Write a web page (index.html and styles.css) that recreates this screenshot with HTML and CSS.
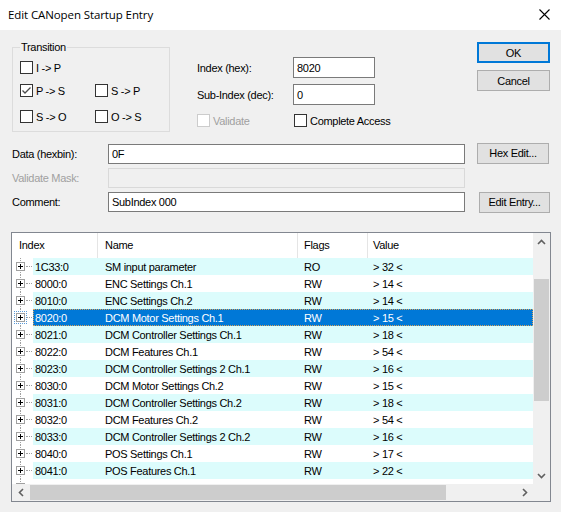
FILE: index.html
```html
<!DOCTYPE html>
<html>
<head>
<meta charset="utf-8">
<link rel="stylesheet" href="styles.css">
</head>
<body>
<div class="dialog">
  <div class="titlebar">
    <span class="title">Edit CANopen Startup Entry</span>
    <svg class="close" width="11" height="11" viewBox="0 0 11 11"><path d="M0.5 0.5 L10.5 10.5 M10.5 0.5 L0.5 10.5" stroke="#000" stroke-width="1.1" fill="none"/></svg>
  </div>
  <div class="content">
    <div class="top">
      <div class="group">
        <span class="legend">Transition</span>
        <div class="grow r1">
          <label class="chk"><span class="cb"></span><span>I -&gt; P</span></label>
        </div>
        <div class="grow r2">
          <label class="chk"><span class="cb"><svg width="11" height="11" viewBox="0 0 11 11"><path d="M1.5 5.5 L4 8 L9.5 2.5" stroke="#4a4a4a" stroke-width="1.3" fill="none"/></svg></span><span>P -&gt; S</span></label>
          <label class="chk"><span class="cb"></span><span>S -&gt; P</span></label>
        </div>
        <div class="grow r3">
          <label class="chk"><span class="cb"></span><span>S -&gt; O</span></label>
          <label class="chk"><span class="cb"></span><span>O -&gt; S</span></label>
        </div>
      </div>
      <div class="mid">
        <div class="frow"><span class="flabel">Index (hex):</span><span class="input small">8020</span></div>
        <div class="frow f2"><span class="flabel">Sub-Index (dec):</span><span class="input small">0</span></div>
        <div class="vrow">
          <label class="chk disabled w97"><span class="cb"></span><span>Validate</span></label>
          <label class="chk"><span class="cb"></span><span>Complete Access</span></label>
        </div>
      </div>
      <div class="btns">
        <div class="btn default">OK</div>
        <div class="btn b2">Cancel</div>
      </div>
    </div>
    <div class="data">
      <span class="dlabel">Data (hexbin):</span><span class="input">0F</span><div class="btn hex">Hex Edit...</div>
      <span class="dlabel disabledtext">Validate Mask:</span><span class="input dis"></span><span></span>
      <span class="dlabel">Comment:</span><span class="input">SubIndex 000</span><div class="btn edit">Edit Entry...</div>
    </div>
    <div class="list">
      <div class="view">
        <div class="hdr">
          <div class="hc c1">Index</div>
          <div class="hc c2">Name</div>
          <div class="hc c3">Flags</div>
          <div class="hc c4">Value</div>
        </div>
        <div class="row alt"><div class="tw"><span class="box"></span></div><div class="rc"><span class="d1">1C33:0</span><span class="d2">SM input parameter</span><span class="d3">RO</span><span class="d4">&gt; 32 &lt;</span></div></div>
        <div class="row"><div class="tw"><span class="box"></span></div><div class="rc"><span class="d1">8000:0</span><span class="d2">ENC Settings Ch.1</span><span class="d3">RW</span><span class="d4">&gt; 14 &lt;</span></div></div>
        <div class="row alt"><div class="tw"><span class="box"></span></div><div class="rc"><span class="d1">8010:0</span><span class="d2">ENC Settings Ch.2</span><span class="d3">RW</span><span class="d4">&gt; 14 &lt;</span></div></div>
        <div class="row sel"><div class="tw"><span class="box"></span></div><div class="rc"><span class="d1">8020:0</span><span class="d2">DCM Motor Settings Ch.1</span><span class="d3">RW</span><span class="d4">&gt; 15 &lt;</span></div></div>
        <div class="row alt"><div class="tw"><span class="box"></span></div><div class="rc"><span class="d1">8021:0</span><span class="d2">DCM Controller Settings Ch.1</span><span class="d3">RW</span><span class="d4">&gt; 18 &lt;</span></div></div>
        <div class="row"><div class="tw"><span class="box"></span></div><div class="rc"><span class="d1">8022:0</span><span class="d2">DCM Features Ch.1</span><span class="d3">RW</span><span class="d4">&gt; 54 &lt;</span></div></div>
        <div class="row alt"><div class="tw"><span class="box"></span></div><div class="rc"><span class="d1">8023:0</span><span class="d2">DCM Controller Settings 2 Ch.1</span><span class="d3">RW</span><span class="d4">&gt; 16 &lt;</span></div></div>
        <div class="row"><div class="tw"><span class="box"></span></div><div class="rc"><span class="d1">8030:0</span><span class="d2">DCM Motor Settings Ch.2</span><span class="d3">RW</span><span class="d4">&gt; 15 &lt;</span></div></div>
        <div class="row alt"><div class="tw"><span class="box"></span></div><div class="rc"><span class="d1">8031:0</span><span class="d2">DCM Controller Settings Ch.2</span><span class="d3">RW</span><span class="d4">&gt; 18 &lt;</span></div></div>
        <div class="row"><div class="tw"><span class="box"></span></div><div class="rc"><span class="d1">8032:0</span><span class="d2">DCM Features Ch.2</span><span class="d3">RW</span><span class="d4">&gt; 54 &lt;</span></div></div>
        <div class="row alt"><div class="tw"><span class="box"></span></div><div class="rc"><span class="d1">8033:0</span><span class="d2">DCM Controller Settings 2 Ch.2</span><span class="d3">RW</span><span class="d4">&gt; 16 &lt;</span></div></div>
        <div class="row"><div class="tw"><span class="box"></span></div><div class="rc"><span class="d1">8040:0</span><span class="d2">POS Settings Ch.1</span><span class="d3">RW</span><span class="d4">&gt; 17 &lt;</span></div></div>
        <div class="row alt"><div class="tw"><span class="box"></span></div><div class="rc"><span class="d1">8041:0</span><span class="d2">POS Features Ch.1</span><span class="d3">RW</span><span class="d4">&gt; 22 &lt;</span></div></div>
        <div class="row"><div class="tw"><span class="box"></span></div><div class="rc"><span class="d1">8050:0</span><span class="d2">POS Settings Ch.2</span><span class="d3">RW</span><span class="d4">&gt; 17 &lt;</span></div></div>
      </div>
      <div class="vscroll">
        <div class="arrow"><svg width="9" height="6" viewBox="0 0 9 6"><path d="M1 5 L4.5 1.5 L8 5" stroke="#606060" stroke-width="1.6" fill="none"/></svg></div>
        <div class="vtrack"><div class="vthumb"></div></div>
        <div class="arrow"><svg width="9" height="6" viewBox="0 0 9 6"><path d="M1 1 L4.5 4.5 L8 1" stroke="#606060" stroke-width="1.6" fill="none"/></svg></div>
      </div>
      <div class="hscroll">
        <div class="harrow"><svg width="6" height="9" viewBox="0 0 6 9"><path d="M5 1 L1.5 4.5 L5 8" stroke="#606060" stroke-width="1.6" fill="none"/></svg></div>
        <div class="htrack"><div class="hthumb"></div></div>
        <div class="harrow"><svg width="6" height="9" viewBox="0 0 6 9"><path d="M1 1 L4.5 4.5 L1 8" stroke="#606060" stroke-width="1.6" fill="none"/></svg></div>
      </div>
      <div class="corner"></div>
    </div>
  </div>
</div>
</body>
</html>
```
FILE: styles.css
```css
* { box-sizing: border-box; }
html, body { margin: 0; padding: 0; }
body {
  width: 561px;
  height: 512px;
  overflow: hidden;
  background: #f0f0f0;
  font-family: "Liberation Sans", Arial, sans-serif;
  font-size: 11px;
  letter-spacing: -0.3px;
  color: #000;
}
.dialog { width: 561px; height: 512px; }
.titlebar {
  height: 30px;
  background: #fff;
  display: flex;
  align-items: center;
  padding-left: 8px;
}
.title {
  font-family: "Open Sans", "Noto Sans", sans-serif;
  font-size: 11.5px;
  letter-spacing: -0.1px;
  margin-top: -1px;
}
.close { margin-left: auto; margin-right: 11px; margin-top: -2px; }
.content { padding: 0 11px 0 12px; }

.top { display: flex; height: 105px; }
.group {
  position: relative;
  margin-top: 17px;
  width: 158px;
  height: 85px;
  border: 1px solid #dcdcdc;
  padding: 13px 0 0 7px;
}
.legend {
  position: absolute;
  top: -8px;
  left: 7px;
  padding: 0 1px;
  background: #f0f0f0;
  line-height: 14px;
}
.grow { display: flex; height: 13px; }
.grow .chk:first-child { width: 75px; }
.r2 { margin-top: 10px; }
.r3 { margin-top: 13px; }
.chk { display: flex; align-items: center; height: 13px; white-space: nowrap; }
.cb {
  width: 13px; height: 13px;
  border: 1px solid #333;
  background: #fff;
  margin-right: 3px;
  flex: none;
  display: flex;
}
.disabled { color: #a0a0a0; }
.disabled .cb { border-color: #cccccc; background: #fff; }

.mid { margin-left: 27px; padding-top: 27px; }
.frow { display: flex; align-items: center; height: 21px; }
.f2 { margin-top: 6px; }
.flabel { width: 96px; }
.input {
  display: flex;
  align-items: center;
  height: 20px;
  border: 1px solid #7a7a7a;
  background: #fff;
  padding-left: 3px;
}
.input.small { width: 82px; height: 21px; }
.input.dis { border-color: #d9d9d9; background: #f0f0f0; }
.vrow { display: flex; margin-top: 9px; }
.w97 { width: 97px; }

.btns { margin-left: auto; padding-top: 12px; }
.btn {
  display: flex;
  align-items: center;
  justify-content: center;
  width: 73px;
  height: 21px;
  background: #e1e1e1;
  border: 1px solid #adadad;
}
.btn.default { border: 2px solid #0078d7; }
.btn.b2 { margin-top: 7px; }

.data {
  display: grid;
  grid-template-columns: 96px 357px 85px;
  grid-auto-rows: 20px;
  row-gap: 4px;
  margin-top: 9px;
  align-items: center;
}
.disabledtext { color: #a0a0a0; }
.btn.hex { width: 72px; margin-left: 12px; margin-top: -2px; }
.btn.edit { width: 71px; margin-left: 14px; }

.list {
  margin-top: 20px;
  margin-left: -1px;
  width: 540px;
  height: 270px;
  border: 1px solid #828790;
  background: #fff;
  display: grid;
  grid-template-columns: 521px 17px;
  grid-template-rows: 251px 17px;
}
.view { overflow: hidden; background: #fff; }
.hdr { display: flex; height: 25px; }
.hc {
  height: 25px;
  display: flex;
  align-items: center;
  border-right: 1px solid #e5e5e5;
  padding-bottom: 1px;
}
.hc.c1 { width: 86px; padding-left: 7px; }
.hc.c2 { width: 200px; padding-left: 7px; }
.hc.c3 { width: 70px; padding-left: 6px; }
.hc.c4 { flex: 1; padding-left: 5px; border-right: none; }

.row { display: flex; height: 17px; }
.tw {
  position: relative;
  width: 21px;
  flex: none;
  display: flex;
  align-items: center;
}
.tw::before {
  content: "";
  position: absolute;
  left: 8px;
  top: 0;
  bottom: 0;
  border-left: 1px dotted #a0a0a0;
}
.tw::after {
  content: "";
  width: 6px;
  margin-left: 1px;
  border-top: 1px dotted #a0a0a0;
}
.box {
  position: relative;
  width: 9px;
  height: 9px;
  margin-left: 4px;
  border: 1px solid #a0a0a0;
  background: #fff;
}
.box::before {
  content: "";
  position: absolute;
  left: 1px; top: 3px;
  width: 5px; height: 1px;
  background: #000;
}
.box::after {
  content: "";
  position: absolute;
  left: 3px; top: 1px;
  width: 1px; height: 5px;
  background: #000;
}
.sel .box { outline: 1px dotted #5a9ad8; outline-offset: 1px; }
.rc { flex: 1; display: flex; align-items: center; white-space: nowrap; }
.alt .rc { background: #dcfcfc; }
.sel .rc {
  background: #0078d7;
  color: #fff;
  outline: 1px dotted #d9a35a;
  outline-offset: -1px;
}
.d1 { width: 64px; padding-left: 2px; }
.d2 { width: 200px; padding-left: 8px; }
.d3 { width: 70px; padding-left: 7px; }
.d4 { padding-left: 6px; }

.vscroll {
  background: #f0f0f0;
  display: flex;
  flex-direction: column;
}
.arrow { height: 17px; display: flex; align-items: center; justify-content: center; flex: none; }
.vtrack { flex: 1; }
.vthumb { margin: 29px 0 0 1px; width: 15px; height: 122px; background: #cdcdcd; }
.hscroll { background: #f0f0f0; display: flex; }
.harrow { width: 17px; display: flex; align-items: center; justify-content: center; flex: none; }
.htrack { flex: 1; }
.hthumb { margin: 1px 0 0 1px; width: 416px; height: 15px; background: #cdcdcd; }
.corner { background: #f0f0f0; }
```
